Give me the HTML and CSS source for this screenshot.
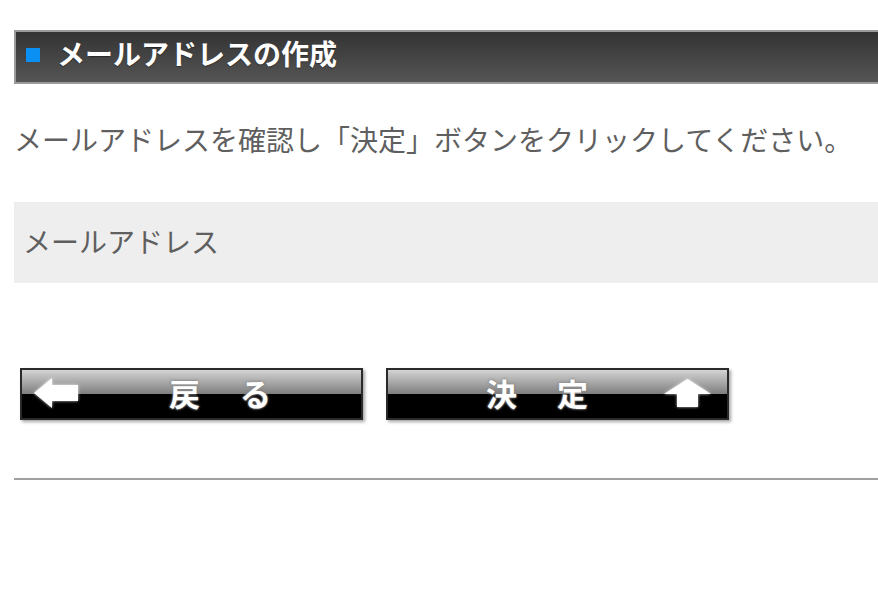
FILE: index.html
```html
<!DOCTYPE html>
<html lang="ja">
<head>
  <meta charset="UTF-8">
  <meta name="viewport" content="width=device-width, initial-scale=1.0">
  <title>メールアドレスの作成</title>
  <link rel="stylesheet" href="styles.css">
</head>
<body>
  <div class="page">
    <h1 class="section-title">
      <span class="title-mark"></span>
      <span>メールアドレスの作成</span>
    </h1>

    <p class="lead">メールアドレスを確認し「決定」ボタンをクリックしてください。</p>

    <div class="address-box">メールアドレス</div>

    <div class="button-row">
      <button class="img-btn back-btn" type="button">
        <svg class="arrow" width="44" height="30" viewBox="0 0 44 30">
          <polygon points="0,15 18,0 18,7 44,7 44,23 18,23 18,30" />
        </svg>
        <span class="btn-label"><span>戻</span><span>る</span></span>
      </button>
      <button class="img-btn submit-btn" type="button">
        <span class="btn-label"><span>決</span><span>定</span></span>
        <svg class="arrow" width="47" height="28" viewBox="0 0 47 28">
          <polygon points="23.5,0 47,15 34,15 34,28 13,28 13,15 0,15" />
        </svg>
      </button>
    </div>

    <hr class="divider">
  </div>
</body>
</html>
```

FILE: styles.css
```css
* {
  box-sizing: border-box;
  margin: 0;
  padding: 0;
}

body {
  background: #ffffff;
  color: #5f5f5f;
  font-family: 'Noto Sans CJK JP', 'Noto Sans', sans-serif;
  overflow: hidden;
}

.page {
  padding: 30px 0 0 14px;
}

.section-title {
  display: flex;
  align-items: center;
  gap: 17px;
  height: 54px;
  padding: 0 0 8px 10px;
  background: linear-gradient(#333333, #555555);
  border: 2px solid #9a9a9a;
  border-right: none;
  color: #ffffff;
  font-size: 28px;
  font-weight: 700;
  line-height: 1;
  text-shadow: 0 1px 1px rgba(0, 0, 0, 0.4);
}

.title-mark {
  width: 14px;
  height: 14px;
  margin-top: 4px;
  background: #0a8ff2;
}

.lead {
  margin-top: 35px;
  font-size: 28px;
  line-height: 40px;
  white-space: nowrap;
}

.address-box {
  margin-top: 43px;
  height: 81px;
  padding: 0 0 3px 9px;
  display: flex;
  align-items: center;
  background: #eeeeee;
  font-size: 28px;
}

.button-row {
  display: flex;
  gap: 23px;
  margin-top: 85px;
  padding-left: 6px;
}

.img-btn {
  display: flex;
  align-items: center;
  width: 343px;
  height: 52px;
  padding-bottom: 3px;
  border: 2px solid #2a2a2a;
  background: linear-gradient(#d4d4d4 0%, #7e7e7e 50%, #000000 51%, #000000 100%);
  box-shadow: 2px 2px 3px rgba(0, 0, 0, 0.35);
  color: #ffffff;
  font-family: 'Noto Sans CJK JP', sans-serif;
  font-size: 31px;
  font-weight: 700;
  line-height: 1;
  cursor: pointer;
}

.arrow {
  fill: #ffffff;
  filter: drop-shadow(0 0 1.5px rgba(255, 255, 255, 0.8));
}

.btn-label {
  display: flex;
  gap: 40px;
  text-shadow: 0 0 2px #999999, 0 0 3px #777777;
}

.back-btn .arrow {
  margin-left: 12px;
}

.back-btn .btn-label {
  margin-left: 91px;
}

.submit-btn .btn-label {
  margin-left: 98px;
}

.submit-btn .arrow {
  margin-left: 76px;
}

.divider {
  margin-top: 58px;
  border: none;
  border-top: 2px solid #a0a0a0;
}
```
